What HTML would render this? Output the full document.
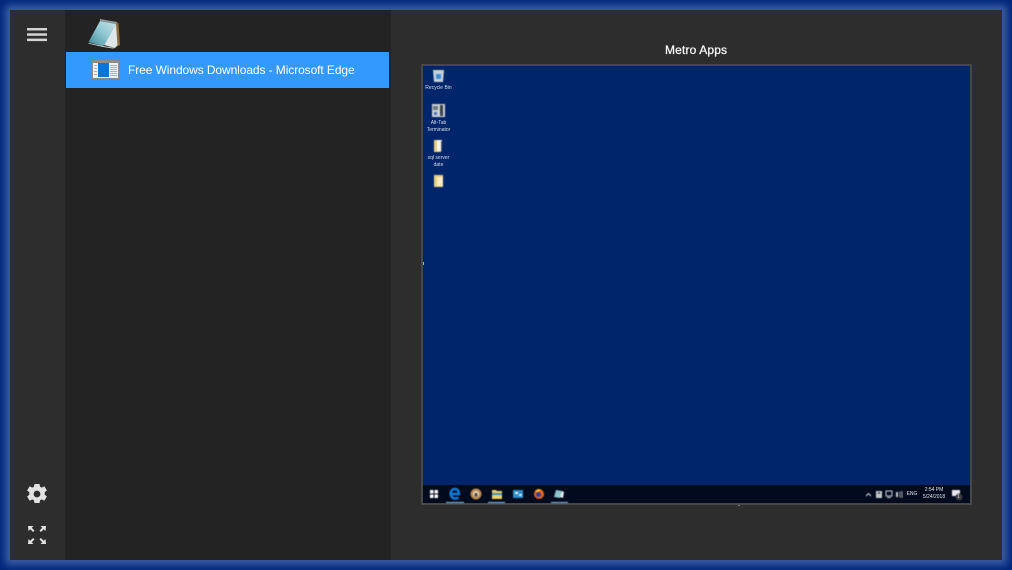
<!DOCTYPE html>
<html><head><meta charset="utf-8"><style>
html,body{margin:0;padding:0;width:1012px;height:570px;overflow:hidden;background:#00287a}
*{box-sizing:border-box}
.a{position:absolute}
#frame{left:0;top:0;width:1012px;height:570px;background:#3c5ea6;box-shadow:inset 0 0 8px 5px #00267a}
#side{left:10px;top:10px;width:55px;height:550px;background:#2d2d2d}
#list{left:65px;top:10px;width:326px;height:550px;background:#232323}
#main{left:391px;top:10px;width:611px;height:550px;background:#2d2d2d}
#sel{left:66px;top:52px;width:323px;height:36px;background:#3399ff}
#seltext{left:128px;top:61px;font:12px/18px "Liberation Sans",sans-serif;color:#fff;white-space:nowrap;letter-spacing:-.09px}
#title{left:665px;top:41px;font:12px/18px "Liberation Sans",sans-serif;-webkit-text-stroke:.3px #f4f4f4;color:#f4f4f4;white-space:nowrap;letter-spacing:.15px}
#prev{left:421px;top:64px;width:551px;height:441px;background:#00256b;border:2px solid #474747}
#bar{left:423px;top:485px;width:547px;height:18px;background:#020a1e}
.l{font:5px/6px "Liberation Sans",sans-serif;color:#d8dde8;text-align:center;white-space:nowrap;filter:blur(.3px)}
</style></head><body>
<div class="a" id="frame"></div>
<div class="a" id="side"></div>
<div class="a" id="list"></div>
<div class="a" id="main"></div>
<div class="a" id="sel"></div>

<svg class="a" style="left:0;top:0" width="1012" height="570" viewBox="0 0 1012 570">
<!-- hamburger -->
<g fill="#d4d4d4"><rect x="27" y="28" width="20" height="2.500"/><rect x="27" y="33.300" width="20" height="2.500"/><rect x="27" y="38.600" width="20" height="2.500"/></g>
<!-- gear -->
<path fill="#e2e2e2" fill-rule="evenodd" d="M34.500 484h5l.6 2.800 1.700.8 2.500-1.400 2.600 4.300-2.200 1.800v2.400l2.200 1.800-2.600 4.300-2.500-1.400-1.700.8-.6 2.800h-5l-.6-2.800-1.700-.8-2.500 1.400-2.600-4.300 2.200-1.800v-2.400l-2.200-1.800 2.600-4.300 2.500 1.400 1.700-.8zM37 490.600a3.400 3.400 0 1 0 0 6.800 3.400 3.400 0 0 0 0-6.800z"/>
<!-- expand -->
<g fill="#e2e2e2"><path d="M28 526h5.500l-1.800 1.800 2.800 2.800-1.400 1.400-2.800-2.800-1.800 1.800z"/><path d="M46 526h-5.500l1.800 1.800-2.800 2.800 1.400 1.400 2.800-2.800 1.800 1.800z"/><path d="M28 544h5.500l-1.800-1.800 2.800-2.800-1.400-1.400-2.800 2.800-1.800-1.800z"/><path d="M46 544h-5.500l1.800-1.800-2.800-2.800 1.400-1.400 2.800 2.800 1.800-1.800z"/></g>
<!-- notepad icon -->
<defs><linearGradient id="n" x1="0" y1="1" x2="1" y2="0"><stop offset="0" stop-color="#3f8795"/><stop offset=".5" stop-color="#8cc6d0"/><stop offset="1" stop-color="#cbe6ea"/></linearGradient></defs>
<path fill="#8a6c3a" d="M114 22l4.500 1 1.500 22-4 2z"/>
<path fill="#dfe6e8" d="M104 45l12-21 1.500 21-2.500 3z"/>
<path fill="url(#n)" d="M100 21l16 3-11 20-2 2-14.500-4z"/>
<path fill="#8f989b" d="M100 19l17 3-1 2-16-3z"/>
<path fill="#c9d6d9" d="M89 43l14 3 12 2-2 .5-10-1.500-15-3.500z"/>
<!-- window icon -->
<rect x="92" y="60" width="27" height="19" fill="#8c8c8c"/>
<rect x="93" y="63" width="25" height="15" fill="#f0f0f0"/>
<rect x="98" y="63" width="11" height="14" fill="#0a74d8"/>
<g fill="#b0b0b0"><rect x="94" y="65" width="3" height="1"/><rect x="94" y="68" width="3" height="1"/><rect x="94" y="71" width="3" height="1"/><rect x="94" y="74" width="3" height="1"/><rect x="110" y="65" width="7" height="1"/><rect x="110" y="67" width="7" height="1"/><rect x="110" y="69" width="7" height="1"/><rect x="110" y="71" width="7" height="1"/><rect x="110" y="73" width="7" height="1"/><rect x="110" y="75" width="7" height="1"/></g>
</svg>

<div class="a" id="seltext">Free Windows Downloads - Microsoft Edge</div>
<div class="a" id="title">Metro Apps</div>
<div class="a" id="prev"></div>
<div class="a" id="bar"></div>
<div class="a" style="left:423px;top:262px;width:1px;height:3px;background:#9fb0d0"></div>
<div class="a" style="left:738px;top:505px;width:2px;height:1px;background:#777"></div>

<svg class="a" style="left:0;top:0;filter:blur(.5px)" width="1012" height="570" viewBox="0 0 1012 570">
<!-- desktop icons -->
<path fill="#c9d1dc" d="M433 70h11l-1 12h-9z"/><path fill="#3f8fd0" d="M436 74h5v5h-5z"/>
<rect x="432" y="104" width="13" height="13" fill="#cfd3d6"/><rect x="433" y="106" width="5" height="4" fill="#6d7880"/><rect x="440" y="105" width="3" height="11" fill="#3a4048"/><rect x="434" y="112" width="3" height="3" fill="#3d70c0"/>
<path fill="#e8cf7c" d="M434 140h7v12h-7z"/><path fill="#f5f5f0" d="M437 140h5v11h-5z"/><rect x="441" y="141" width="1" height="10" fill="#555"/>
<path fill="#e8cf7c" d="M434 175h9v12h-9z"/><path fill="#f6ecc0" d="M437 177h6v9h-6z"/>
<!-- taskbar icons -->
<g fill="#fff"><rect x="430" y="490" width="3.500" height="3.500"/><rect x="434.500" y="490" width="3.500" height="3.500"/><rect x="430" y="494.500" width="3.500" height="3.500"/><rect x="434.500" y="494.500" width="3.500" height="3.500"/></g>
<path fill="none" stroke="#0f7fe0" stroke-width="2.400" d="M451 494h8c0-3-1.500-5-4-5s-4.500 2-4.500 4.500 2 5 4.500 5c1.500 0 2.500-.3 3.500-1"/>
<circle cx="476" cy="494" r="5.500" fill="#b98a4e"/><circle cx="476" cy="494" r="3" fill="#e8e0d0"/><rect x="474.500" y="493" width="3" height="3.500" fill="#5a4630"/>
<path fill="#f0cf66" d="M492 490h4l1 1h5v8h-10z"/><rect x="492" y="493" width="10" height="2" fill="#3b8ec9"/>
<rect x="513" y="490" width="10" height="8" fill="#2f8fc7"/><rect x="515" y="492" width="3" height="2" fill="#e6f2fa"/><rect x="519" y="494" width="3" height="2" fill="#cbe4f3"/>
<circle cx="539" cy="494" r="5" fill="#e8641e"/><circle cx="538.500" cy="494.500" r="2.500" fill="#3a3a9a"/><path fill="#ffc21c" d="M535 491l3-2 3 1-3 2z"/>
<path fill="#8fc4cc" d="M556 490l6 1-2 7-6-1z"/><path fill="#e6eef0" d="M560 497l2-6 2 1-1 6z"/>
<g fill="#8fd0f5"><rect x="446" y="502" width="18" height="1"/><rect x="488" y="502" width="17" height="1"/><rect x="551" y="502" width="17" height="1"/></g>
<!-- tray -->
<path fill="none" stroke="#d0d4da" d="M866 496l2.500-2.500 2.500 2.500"/>
<rect x="876" y="491" width="6" height="7" fill="#c4c8cc"/><rect x="878" y="492" width="2" height="2" fill="#4a4f55"/>
<rect x="886" y="491" width="6" height="5" fill="none" stroke="#c8ccd2"/><rect x="887" y="497" width="4" height="1" fill="#c8ccd2"/>
<path fill="#c8ccd2" d="M896 492h2v5h-2z"/><path fill="none" stroke="#c8ccd2" stroke-width=".8" d="M900 491.500v6M902 491v7"/>
<rect x="952" y="490" width="8" height="6" fill="#e8eaee"/><circle cx="959" cy="497" r="3.500" fill="#3a3c40"/>
</svg>

<div class="a l" style="left:421px;top:85px;width:35px">Recycle Bin</div>
<div class="a l" style="left:421px;top:120px;width:35px;line-height:7px">Alt-Tab<br>Terminator</div>
<div class="a l" style="left:421px;top:155px;width:35px;line-height:7px">sql server<br>date</div>
<div class="a l" style="left:901px;top:491px;font-size:5px;width:22px;line-height:7px;color:#dfe3ea">ENG</div>
<div class="a l" style="left:918px;top:487px;width:32px;line-height:7px;font-size:5px;color:#dfe3ea">2:54 PM<br>5/24/2018</div>
<div class="a" style="left:957px;top:494px;width:5px;font:5px/6px 'Liberation Sans',sans-serif;color:#e8e8e8">1</div>
</body></html>
